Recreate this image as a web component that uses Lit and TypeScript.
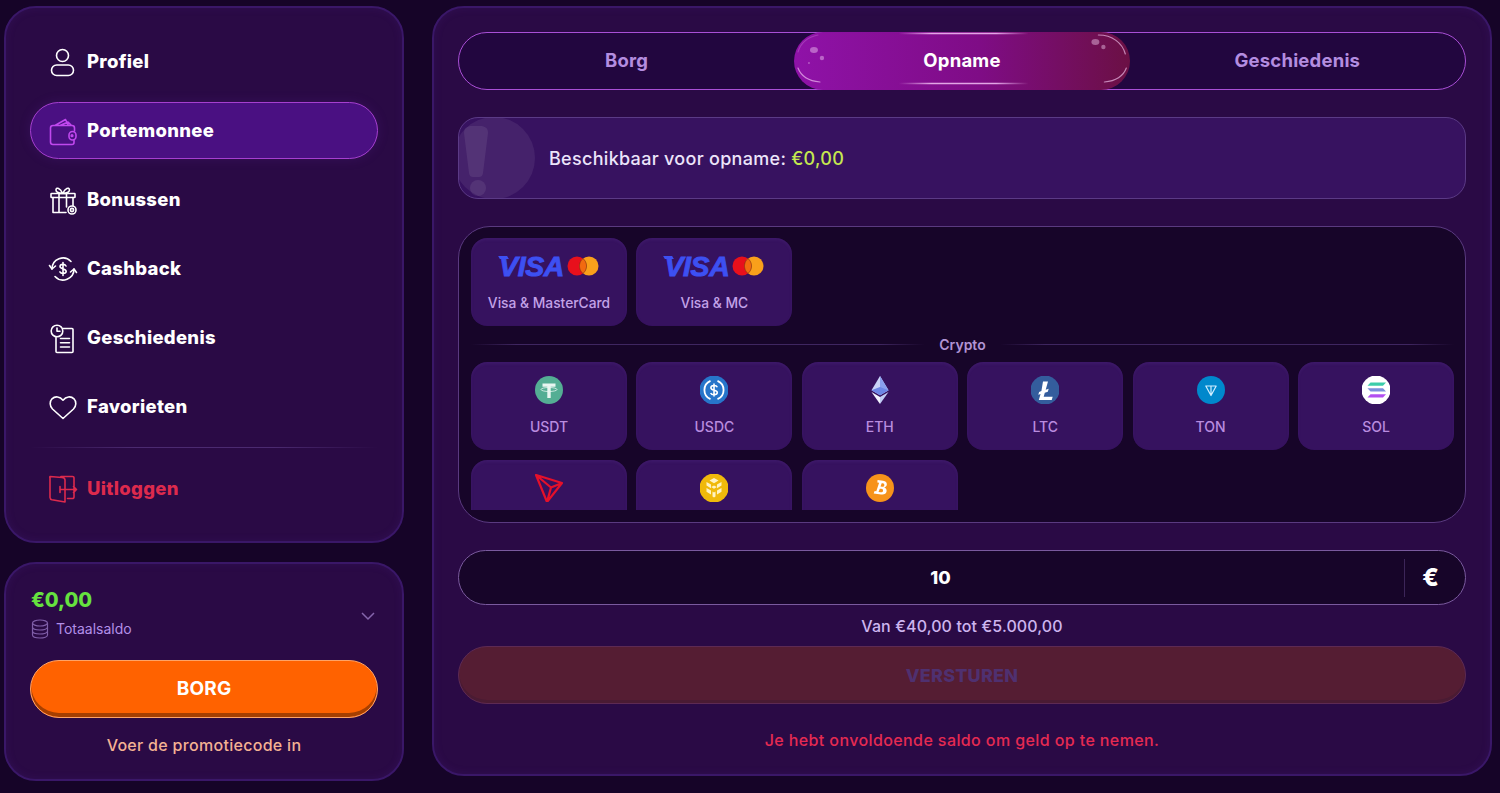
import { LitElement, html, css, svg } from 'lit';
import { customElement } from 'lit/decorators.js';

const navIcons: Record<string, unknown> = {
  user: svg`<circle cx="13.500" cy="7.500" r="6"/><rect x="2.500" y="17" width="22" height="10.500" rx="5.200"/>`,
  wallet: svg`<path d="M6 8.500 16.500 2.500l3 6M11 8.500l8-3.500 3.500 3.500M1.500 11c0-1.500 1-2.500 2.500-2.500h19c1.500 0 2.500 1 2.500 2.500v3M25 23.500v2c0 1.200-.8 2-2 2H4c-1.500 0-2.500-1-2.500-2.500V11"/><rect x="20" y="14.500" width="7" height="8.500" rx="3.500"/><circle cx="23" cy="18.700" r=".8"/>`,
  gift: svg`<rect x="2" y="7.500" width="24" height="4" rx=".6"/><path d="M4 11.500V26.500h13M24 11.500v8M10 7.500V26.500M17.500 7.500V21M13.700 7.500C9 7.500 6.500 5.500 7 3.500c.6-2.200 4-2 6.700 4 2.700-6 6.100-6.200 6.700-4 .5 2-2 4-6.700 4Z"/><circle cx="23" cy="24" r="4"/><circle cx="23" cy="24" r="1.600"/>`,
  cash: svg`<path d="M3 14A11 11 0 0 1 22 6.500M25 14A11 11 0 0 1 6 21.500"/><path d="M.5 10.500 3 14l3.500-3M27.500 17.500 25 14l-3.500 3"/><path d="M17 11c-.5-1-1.700-1.600-3-1.600-1.800 0-3 .9-3 2.200 0 3 6.200 1.700 6.200 4.700 0 1.300-1.300 2.200-3.200 2.200-1.400 0-2.600-.6-3.100-1.600M14 7.500v13"/>`,
  history: svg`<circle cx="8" cy="7" r="5.800"/><path d="M8 4v3.300h3M14 4.500h9a1 1 0 0 1 1 1v22a1 1 0 0 1-1 1H8a1 1 0 0 1-1-1V13.500M11.500 14.500h9M11.500 18.700h9M11.500 23h9"/>`,
  heart: svg`<path d="M14 25.500 3.500 16C.500 13 .500 8.500 3 5.800 6.200 2.800 11 3.500 14 7.200c3-3.700 7.800-4.400 11-1.400 2.500 2.700 2.500 7.200-.5 10.200Z"/>`,
  door: svg`<path d="M12 1.500h11.500A1.500 1.500 0 0 1 25 3v19a1.500 1.500 0 0 1-1.500 1.500H18.500M1 1.500 13 2.500c2 .2 3 1.200 3 2.500V27L3 24.800A2.500 2.500 0 0 1 1 22.500V3A1.500 1.500 0 0 1 1 1.500ZM11 14.500h16M24.500 11.500l3 3-3 3M11 11.500v6"/>`,
};

const cryptoIcons: Record<string, unknown> = {
  USDT: svg`<circle cx="14" cy="14" r="14" fill="#54ae94"/><path d="M7.500 7.500h13v3.200h-4.800V22h-3.400V10.700H7.500Z" fill="#e8f6f1"/><ellipse cx="14" cy="13.500" rx="8" ry="2" fill="none" stroke="#e8f6f1" stroke-width=".8"/>`,
  USDC: svg`<circle cx="14" cy="14" r="14.500" fill="#2775ca"/><path d="M10.500 4.800a10 10 0 0 0 0 18.400M17.500 4.800a10 10 0 0 1 0 18.400" fill="none" stroke="#fff" stroke-width="1.800"/><path d="M17.300 11.200c-.4-1-1.700-1.700-3.300-1.700-1.900 0-3.100 1-3.100 2.300 0 3.200 6.400 1.700 6.400 4.700 0 1.300-1.400 2.200-3.300 2.200-1.700 0-2.900-.7-3.300-1.800M14 7.500v13" fill="none" stroke="#fff" stroke-width="1.600"/>`,
  ETH: svg`<path d="M14 0 5.500 14.300 14 19.300l8.500-5Z" fill="#c9d3f8"/><path d="M14 0v19.300l8.500-5Z" fill="#8aa0ee"/><path d="M5.500 14.300 14 11l8.500 3.300L14 19.300Z" fill="#6d86e6"/><path d="M5.500 16 14 28V21Z" fill="#f3f5fe"/><path d="M22.500 16 14 28V21Z" fill="#c2cdf6"/>`,
  LTC: svg`<circle cx="14" cy="14" r="14.500" fill="#345d9d"/><path d="M12 5.500h5l-2.300 8.300 3-1-.9 3-3 1-1.100 3.900h9l-1 3.300H7.800l1.800-6.100-2.300.8.800-2.800 2.300-.8Z" fill="#fff"/>`,
  TON: svg`<circle cx="14" cy="14" r="14" fill="#0088cc"/><path d="M8.800 10h10.400L14 19.500ZM14 10v9.500" fill="none" stroke="#cfeeff" stroke-width="1.200" stroke-linejoin="round"/>`,
  SOL: svg`<circle cx="14" cy="14" r="14.500" fill="#fff"/><path d="M8.500 6.500H24l-3 3.300H5.500Z" fill="#3ccdaa"/><path d="M5.500 12.300H21l3 3.300H8.500Z" fill="#7b8fdc"/><path d="M8.500 18.200H24l-3 3.300H5.500Z" fill="#b24ff0"/>`,
  TRX: svg`<path d="M1 1 27 9 12 28Z M1 1 16 13.500 12 28M16 13.500 27 9M1 1l15 12.500" fill="none" stroke="#e5102a" stroke-width="2.200" stroke-linejoin="round"/>`,
  BNB: svg`<circle cx="14" cy="14" r="14.500" fill="#f0b90b"/><path d="m14 4 4.500 2.600-4.500 2.600-4.500-2.600ZM6.500 8l4.500 2.600v3.600L6.500 11.600ZM21.500 8v3.600L17 14.200v-3.600ZM14 11.500l2.800 1.600-2.800 1.600-2.800-1.600ZM6.500 14l4.500 2.600v3.800l-4.500-2.600ZM21.500 14v3.800L17 20.400v-3.800ZM12.500 17.500l1.500.9 1.500-.9v5l-1.500.9-1.500-.9Z" fill="#fff3c4"/>`,
  BTC: svg`<circle cx="14" cy="14" r="14" fill="#f7931a"/><path d="M10.500 6.500h5.500c2.700 0 4.300 1.300 4.300 3.400 0 1.500-.9 2.500-2.200 3 1.800.4 2.900 1.600 2.900 3.500 0 2.500-2 3.900-5 3.900H8.500l.6-2.500h1.700l1.600-8.800h-1.800ZM15 9l-.7 3.400h1.700c1.100 0 1.900-.7 1.900-1.800 0-1-.8-1.600-1.900-1.600Zm-1.100 5.700-.8 3.500h2.200c1.300 0 2.100-.8 2.100-1.900s-.8-1.600-2.100-1.600Z" fill="#fff" transform="rotate(8 14 14)"/>`,
};

@customElement('visa-logo')
export class VisaLogo extends LitElement {
  static styles = css`
    :host {
      display: flex;
      align-items: center;
      height: 28px;
    }

    .word {
      position: relative;
      font: italic 700 28.500px/28px 'Liberation Sans', sans-serif;
      letter-spacing: -0.4px;
      color: #3d50f2;
      -webkit-text-stroke: 0.9px #3d50f2;
    }

    .word::before {
      content: '';
      position: absolute;
      left: 0;
      top: 4px;
      width: 9px;
      height: 3px;
      background: #3d50f2;
      transform: skewX(30deg);
    }

    svg {
      margin-left: 3px;
      display: block;
    }
  `;

  render() {
    return html`
      <span class="word">VISA</span>
      <svg width="32" height="20" viewBox="0 0 32 20">
        <circle cx="10" cy="10" r="9.500" fill="#e8101c"/>
        <circle cx="22" cy="10" r="9.500" fill="#f9a01b"/>
        <path d="M16 2.600a9.500 9.500 0 0 1 0 14.800a9.500 9.500 0 0 1 0-14.800Z" fill="#f26a10" stroke="#7a2a10" stroke-width=".6"/>
      </svg>
    `;
  }
}

@customElement('app-root')
export class AppRoot extends LitElement {
  static styles = css`
    :host {
      display: block;
      height: 793px;
      overflow: hidden;
      background: #160428;
      font-family: Inter, 'Open Sans', sans-serif;
      color: #fff;
    }

    .shell {
      display: grid;
      grid-template-columns: 400px 1060px;
      gap: 28px;
      padding: 6px 0 0 4px;
    }

    .side {
      display: flex;
      flex-direction: column;
      gap: 19px;
    }

    .panel {
      box-sizing: border-box;
      background: #2a0a45;
      border: 2px solid #3a1768;
      box-shadow: inset 0 0 8px rgba(90, 50, 160, 0.15);
      border-radius: 32px;
    }

    .nav {
      height: 537px;
      padding: 25px 24px 0;
    }

    .nav-item {
      display: flex;
      align-items: center;
      gap: 10px;
      box-sizing: border-box;
      height: 57px;
      margin-bottom: 12px;
      padding-left: 18px;
      font-size: 18.500px;
      font-weight: 800;
      letter-spacing: 0.3px;
      border: 1px solid transparent;
    }

    .nav-item span {
      margin-top: -2px;
    }

    .nav-item svg {
      width: 28px;
      height: 28px;
      fill: none;
      stroke: currentColor;
      stroke-width: 1.600;
      stroke-linecap: round;
      stroke-linejoin: round;
      flex: none;
      overflow: visible;
    }

    .nav-item.active {
      background: #4a1082;
      border-color: #a63fd0;
      border-radius: 29px;
      box-shadow: 0 0 12px rgba(100, 40, 170, 0.2);
    }

    .nav-item.active svg {
      stroke: #c048ee;
    }

    .nav-item.logout {
      color: #dd2a4d;
      margin: 0;
    }

    .nav-item.logout svg {
      stroke: #dd2a4d;
    }

    .nav-rule {
      height: 1px;
      margin: 0 0 12px;
      background: linear-gradient(90deg, transparent, #4b2a70 30%, #4b2a70 70%, transparent);
    }

    .balance {
      height: 219px;
      padding: 18px 24px 0;
    }

    .balance-top {
      display: flex;
      align-items: center;
      justify-content: space-between;
      height: 60px;
      padding-left: 1px;
    }

    .amount {
      font-size: 20px;
      line-height: 28px;
      font-weight: 800;
      color: #66e23f;
    }

    .total {
      display: flex;
      align-items: center;
      gap: 7px;
      margin-top: 5px;
      font-size: 14px;
      color: #b28fe8;
    }

    .total svg {
      width: 18px;
      height: 20px;
      fill: none;
      stroke: #7f5ea8;
      stroke-width: 1.200;
    }

    .chevron {
      width: 16px;
      height: 10px;
      margin: 8px 2px 0 0;
      fill: none;
      stroke: #8565ac;
      stroke-width: 1.500;
    }

    .deposit {
      box-sizing: border-box;
      display: flex;
      align-items: center;
      justify-content: center;
      height: 58px;
      margin-top: 18px;
      padding-bottom: 1px;
      background: #ff6200;
      border: 1.500px solid #ffa366;
      border-radius: 29px;
      box-shadow: inset 0 -4px 0 #a63f00;
      font-size: 19px;
      font-weight: 700;
      letter-spacing: 0.2px;
    }

    .promo {
      margin-top: 17px;
      text-align: center;
      font-size: 16px;
      line-height: 20px;
      font-weight: 500;
      letter-spacing: 0.3px;
      color: #f4b293;
    }

    .main {
      height: 770px;
      padding: 24px 24px 0 24px;
    }

    .tabs {
      display: grid;
      grid-template-columns: repeat(3, 1fr);
      box-sizing: border-box;
      height: 58px;
      background: #22063f;
      border: 1px solid #a94fd6;
      border-radius: 29px;
    }

    .tab {
      position: relative;
      display: flex;
      align-items: center;
      justify-content: center;
      padding-bottom: 2px;
      font-size: 18.500px;
      font-weight: 700;
      letter-spacing: 0.2px;
      color: #b48de0;
    }

    .tab.active {
      color: #fff;
      margin: -1px 0;
      background: linear-gradient(90deg, #8f12a8 0%, #7f0c86 55%, #6b1044 100%);
      border-radius: 29px;
    }

    .shine {
      position: absolute;
      left: 0;
      top: 0;
      width: 100%;
      height: 100%;
      fill: none;
      stroke-linecap: round;
    }

    .notice {
      position: relative;
      overflow: hidden;
      display: flex;
      align-items: center;
      box-sizing: border-box;
      height: 82px;
      margin-top: 27px;
      padding-left: 90px;
      background: #371260;
      border: 1px solid #5b3a86;
      border-radius: 20px;
      font-size: 18px;
      font-weight: 500;
      letter-spacing: 0.3px;
      color: #ece4fa;
    }

    .notice b {
      margin-left: 5px;
      font-weight: 500;
      color: #c5e84f;
    }

    .notice svg {
      position: absolute;
      left: -1px;
      top: -1px;
      width: 78px;
      height: 82px;
    }

    .methods {
      box-sizing: border-box;
      height: 297px;
      margin-top: 27px;
      padding: 11px 11px 0 12px;
      background: #170529;
      border: 1px solid #5a3a80;
      border-radius: 32px;
    }

    .methods-scroll {
      height: 272px;
      overflow: hidden;
    }

    .grid {
      display: grid;
      grid-template-columns: repeat(6, 1fr);
      gap: 10px 9.400px;
    }

    .method {
      box-sizing: border-box;
      display: flex;
      flex-direction: column;
      align-items: center;
      height: 88px;
      padding-top: 14px;
      background: #36125f;
      border-radius: 16px;
      box-shadow: inset 0 2px 3px rgba(110, 70, 170, 0.15);
      font-size: 14px;
      font-weight: 500;
      color: #b98cdf;
    }

    .method svg {
      display: block;
      width: 28px;
      height: 28px;
      flex: none;
    }

    .method span {
      margin-top: 14px;
      line-height: 18px;
    }

    .method.card {
      color: #c3a2e8;
    }

    .method.card span {
      font-size: 13.800px;
      white-space: nowrap;
    }

    .crypto-rule {
      display: flex;
      align-items: center;
      gap: 14px;
      height: 36px;
      font-size: 14px;
      font-weight: 600;
      color: #b194d4;
    }

    .crypto-rule::before,
    .crypto-rule::after {
      content: '';
      flex: 1;
      height: 1px;
      background: linear-gradient(90deg, transparent, #3f2660 10%, #3f2660 90%, transparent);
    }

    .amount-input {
      display: flex;
      align-items: center;
      box-sizing: border-box;
      height: 55px;
      margin-top: 27px;
      background: #170529;
      border: 1px solid #7a5a9e;
      border-radius: 28px;
      font-size: 18px;
      font-weight: 800;
    }

    .amount-input .value {
      flex: 1;
      padding-left: 18px;
      text-align: center;
    }

    .amount-input .suffix {
      display: flex;
      align-items: center;
      justify-content: center;
      box-sizing: border-box;
      width: 61px;
      height: 38px;
      padding-right: 9px;
      border-left: 1px solid #3c2558;
      font-size: 24px;
      font-weight: 800;
    }

    .range {
      margin-top: 11px;
      text-align: center;
      font-size: 16px;
      line-height: 20px;
      font-weight: 500;
      letter-spacing: 0.1px;
      color: #cdb5ef;
    }

    .submit {
      box-sizing: border-box;
      display: flex;
      align-items: center;
      justify-content: center;
      height: 58px;
      margin-top: 10px;
      background: #551d33;
      border: 1px solid #5d2a53;
      border-radius: 29px;
      box-shadow: inset 0 -3px 0 #4a1b33;
      font-size: 18px;
      font-weight: 800;
      letter-spacing: 0.2px;
      color: #4f3070;
    }

    .error {
      margin-top: 26px;
      text-align: center;
      font-size: 16px;
      line-height: 20px;
      font-weight: 500;
      letter-spacing: 0.4px;
      color: #e52a52;
    }
  `;

  private navItem(label: string, icon: string, cls = '') {
    return html`
      <div class="nav-item ${cls}">
        <svg viewBox="0 0 28 28">${navIcons[icon]}</svg>
        <span>${label}</span>
      </div>
    `;
  }

  private coin(name: string, label = name) {
    return html`
      <div class="method">
        <svg viewBox="0 0 28 28">${cryptoIcons[name]}</svg>
        <span>${label}</span>
      </div>
    `;
  }

  private cardMethod(label: string) {
    return html`
      <div class="method card">
        <visa-logo></visa-logo>
        <span>${label}</span>
      </div>
    `;
  }

  render() {
    return html`
      <div class="shell">
        <div class="side">
          <div class="panel nav">
            ${this.navItem('Profiel', 'user')}
            ${this.navItem('Portemonnee', 'wallet', 'active')}
            ${this.navItem('Bonussen', 'gift')}
            ${this.navItem('Cashback', 'cash')}
            ${this.navItem('Geschiedenis', 'history')}
            ${this.navItem('Favorieten', 'heart')}
            <div class="nav-rule"></div>
            ${this.navItem('Uitloggen', 'door', 'logout')}
          </div>
          <div class="panel balance">
            <div class="balance-top">
              <div>
                <div class="amount">€0,00</div>
                <div class="total">
                  <svg viewBox="0 0 18 20">
                    <ellipse cx="9" cy="4" rx="7.500" ry="3"/>
                    <path d="M1.500 4v12c0 1.700 3.400 3 7.500 3s7.500-1.300 7.500-3V4M1.500 8c0 1.700 3.400 3 7.500 3s7.500-1.300 7.500-3M1.500 12c0 1.700 3.400 3 7.500 3s7.500-1.300 7.500-3"/>
                  </svg>
                  Totaalsaldo
                </div>
              </div>
              <svg class="chevron" viewBox="0 0 16 10"><path d="m2 2 6 6 6-6"/></svg>
            </div>
            <div class="deposit">BORG</div>
            <div class="promo">Voer de promotiecode in</div>
          </div>
        </div>

        <div class="panel main">
          <div class="tabs">
            <div class="tab">Borg</div>
            <div class="tab active">
              <svg class="shine" viewBox="0 0 336 58" preserveAspectRatio="none">
                <defs>
                  <linearGradient id="gloss" gradientUnits="userSpaceOnUse" x1="105" y1="0" x2="235" y2="0">
                    <stop offset="0" stop-color="#e2a5e5" stop-opacity="0"/>
                    <stop offset=".25" stop-color="#e2a5e5"/>
                    <stop offset=".75" stop-color="#e2a5e5"/>
                    <stop offset="1" stop-color="#e2a5e5" stop-opacity="0"/>
                  </linearGradient>
                </defs>
                <path d="M105 1.500h130M105 51.500h130" stroke="url(#gloss)" stroke-width="1.500"/>
                <path d="M4 36c3 8 11 13 22 14M333 36c-3 8-11 13-22 14M305 3c14 0 24 8 27 19" stroke="rgba(255,215,255,.6)" stroke-width="1.200"/>
                <path d="M4 20C7 10 14 5 24 3" stroke="rgba(255,215,255,.2)" stroke-width="1.200"/>
                <ellipse cx="20" cy="18" rx="4" ry="3" fill="rgba(255,225,255,.4)"/>
                <circle cx="28" cy="26" r="2.200" fill="rgba(255,225,255,.4)"/>
                <circle cx="15" cy="31" r="1" fill="rgba(255,225,255,.35)"/>
                <ellipse cx="302" cy="10" rx="4" ry="3" fill="rgba(255,225,255,.4)"/>
                <circle cx="310" cy="15" r="2.200" fill="rgba(255,225,255,.4)"/>
              </svg>
              Opname
            </div>
            <div class="tab">Geschiedenis</div>
          </div>

          <div class="notice">
            <svg viewBox="0 0 78 82">
              <circle cx="36" cy="41" r="41" fill="rgba(255,255,255,0.07)"/>
              <path d="M6 16c0-5 3-7 8-7h8c5 0 8 2 8 7l-5 40c-.5 3-2 4-4 4h-6c-2 0-3.500-1-4-4Z" fill="rgba(255,255,255,0.08)"/>
              <circle cx="20" cy="71" r="8" fill="rgba(255,255,255,0.08)"/>
            </svg>
            Beschikbaar voor opname: <b>€0,00</b>
          </div>

          <div class="methods">
            <div class="methods-scroll">
              <div class="grid">
                ${this.cardMethod('Visa & MasterCard')}
                ${this.cardMethod('Visa & MC')}
              </div>
              <div class="crypto-rule">Crypto</div>
              <div class="grid">
                ${this.coin('USDT')}
                ${this.coin('USDC')}
                ${this.coin('ETH')}
                ${this.coin('LTC')}
                ${this.coin('TON')}
                ${this.coin('SOL')}
                ${this.coin('TRX')}
                ${this.coin('BNB')}
                ${this.coin('BTC')}
              </div>
            </div>
          </div>

          <div class="amount-input">
            <div class="value">10</div>
            <div class="suffix">€</div>
          </div>
          <div class="range">Van €40,00 tot €5.000,00</div>
          <div class="submit">VERSTUREN</div>
          <div class="error">Je hebt onvoldoende saldo om geld op te nemen.</div>
        </div>
      </div>
    `;
  }
}
